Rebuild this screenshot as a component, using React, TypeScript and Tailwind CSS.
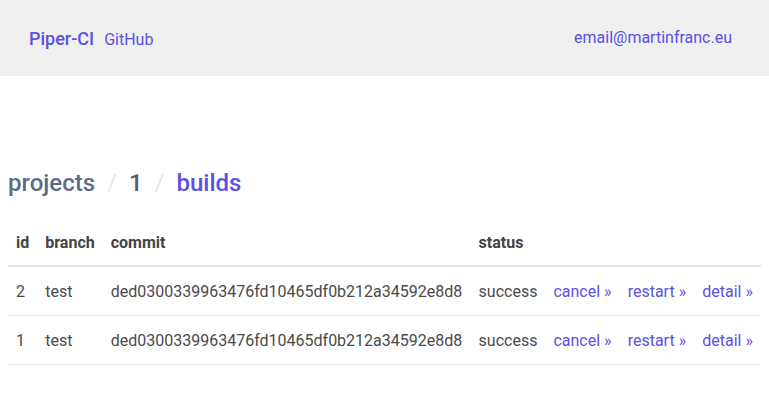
import React from "react";

const rows = [
  { id: 2, branch: "test", commit: "ded0300339963476fd10465df0b212a34592e8d8", status: "success" },
  { id: 1, branch: "test", commit: "ded0300339963476fd10465df0b212a34592e8d8", status: "success" },
];

export default function App() {
  return (
    <div className="min-h-[416px] bg-white text-[#4a4a4a]" style={{ fontFamily: "Roboto, 'Noto Sans', sans-serif" }}>
      <header className="h-[76px] bg-[#f0f0f0] flex items-center justify-between pl-[29px] pr-[37px]">
        <div className="flex items-baseline gap-[10px]">
          <a className="text-[18px] font-medium text-[#5a50e6]">Piper-CI</a>
          <a className="text-[16px] text-[#5a50e6]">GitHub</a>
        </div>
        <a className="text-[16px] text-[#5a50e6]">email@martinfranc.eu</a>
      </header>
      <main className="px-2 pt-[92px]">
        <nav className="flex items-center text-[24px] leading-[30px] font-medium">
          <span className="text-[#5b6b8c]">projects</span>
          <span className="text-[#e5e5ea] px-[12px] font-normal">/</span>
          <span className="text-[#5d5a6e]">1</span>
          <span className="text-[#e5e5ea] px-[12px] font-normal">/</span>
          <span className="text-[#5a50e6]">builds</span>
        </nav>
        <table className="w-full mt-[20px] text-[16px] border-collapse">
          <thead>
            <tr className="border-b-2 border-[#e5e5ea]">
              <th className="text-left font-bold px-2 pt-[13px] pb-[10px] leading-6 text-[#444]">id</th>
              <th className="text-left font-bold px-2 pt-[13px] pb-[10px] leading-6 text-[#444]">branch</th>
              <th className="text-left font-bold px-2 pt-[13px] pb-[10px] leading-6 text-[#444]">commit</th>
              <th className="text-left font-bold px-2 pt-[13px] pb-[10px] leading-6 text-[#444]">status</th>
              <th className="px-2"></th>
              <th className="px-2"></th>
              <th className="px-2"></th>
            </tr>
          </thead>
          <tbody>
            {rows.map((r) => (
              <tr key={r.id} className="border-b border-[#e5e5ea]">
                <td className="px-2 pt-[13px] pb-[11px] leading-6">{r.id}</td>
                <td className="px-2 pt-[13px] pb-[11px] leading-6">{r.branch}</td>
                <td className="px-2 pt-[13px] pb-[11px] leading-6">{r.commit}</td>
                <td className="px-2 pt-[13px] pb-[11px] leading-6">{r.status}</td>
                <td className="px-2 pt-[13px] pb-[11px] leading-6 text-[#5a50e6] whitespace-nowrap">cancel »</td>
                <td className="px-2 pt-[13px] pb-[11px] leading-6 text-[#5a50e6] whitespace-nowrap">restart »</td>
                <td className="px-2 pt-[13px] pb-[11px] leading-6 text-[#5a50e6] whitespace-nowrap">detail »</td>
              </tr>
            ))}
          </tbody>
        </table>
      </main>
    </div>
  );
}
